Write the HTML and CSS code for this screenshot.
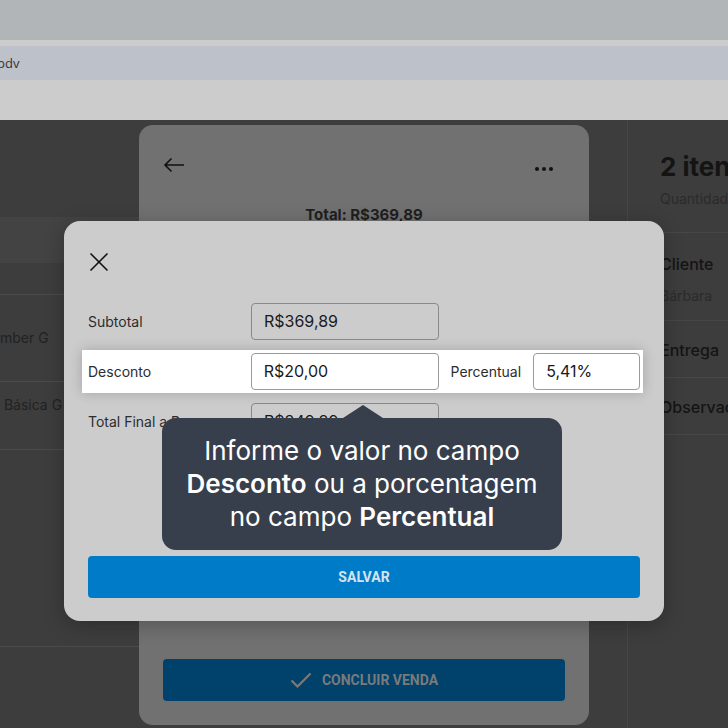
FILE: index.html
```html
<!DOCTYPE html>
<html lang="pt-br">

<head>
    <meta charset="UTF-8">
    <meta name="viewport" content="width=device-width, initial-scale=1.0">
    <title>PDV - Desconto</title>
    <link rel="stylesheet" href="styles.css">
</head>

<body>
    <div class="chrome">
        <div class="tabs"></div>
        <div class="url">pdv</div>
    </div>

    <div class="app">
        <div class="list">
            <div class="list-head"></div>
            <div class="list-band"></div>
            <div class="list-row list-row--sub"></div>
            <div class="list-row list-row--a">mber G</div>
            <div class="list-row list-row--b">&nbsp;Básica G</div>
            <div class="list-row list-row--c"></div>
        </div>

        <div class="sale-card">
            <div class="sale-top">
                <svg class="icon-back" width="22" height="16" viewBox="0 0 22 16">
                    <path d="M21 8H2M8.5 1.5L2 8l6.5 6.5" fill="none" stroke="#111" stroke-width="1.6"/>
                </svg>
                <div class="dots"><span></span><span></span><span></span></div>
            </div>
            <div class="sale-total">Total: R$369,89</div>
            <div class="sale-spacer"></div>
            <button class="btn-finish">
                <svg width="22" height="16" viewBox="0 0 22 16">
                    <path d="M1.5 8.5l6 6L20.5 1.5" fill="none" stroke="#7a7a7a" stroke-width="2.2"/>
                </svg>
                CONCLUIR VENDA
            </button>
        </div>

        <div class="summary">
            <div class="summary-head">
                <div class="summary-title">2 itens</div>
                <div class="summary-sub">Quantidade: 2</div>
            </div>
            <div class="summary-block summary-block--client">
                <div class="summary-label">Cliente</div>
                <div class="summary-sub summary-sub--client">Bárbara</div>
            </div>
            <div class="summary-block">
                <div class="summary-label">Entrega</div>
            </div>
            <div class="summary-block">
                <div class="summary-label">Observações</div>
            </div>
        </div>

        <div class="modal">
            <div class="modal-head">
                <svg width="20" height="20" viewBox="0 0 20 20">
                    <path d="M1.5 1.5l17 17M18.5 1.5l-17 17" fill="none" stroke="#111" stroke-width="1.6"/>
                </svg>
            </div>

            <div class="fields">
                <div class="field-row">
                    <label class="field-label">Subtotal</label>
                    <div class="field-input field-input--muted">R$369,89</div>
                </div>
                <div class="field-row field-row--focus">
                    <label class="field-label">Desconto</label>
                    <div class="field-input">R$20,00</div>
                    <label class="field-label field-label--inline">Percentual</label>
                    <div class="field-input field-input--small">5,41%</div>
                </div>
                <div class="field-row">
                    <label class="field-label">Total Final a Pagar</label>
                    <div class="field-input field-input--muted">R$349,89</div>
                </div>
            </div>

            <button class="btn-save">SALVAR</button>

            <div class="tip">
                Informe o valor no campo <b>Desconto</b> ou a porcentagem no campo <b>Percentual</b>
            </div>
        </div>
    </div>
</body>

</html>
```

FILE: styles.css
```css
html, body {
    margin: 0;
    height: 100%;
    overflow: hidden;
}

body {
    font-family: Inter, "Liberation Sans", sans-serif;
    background-color: #3d3d3d;
}

/* barra do navegador (escurecida) */
.chrome {
    height: 120px;
    background-color: #cccccc;
}

.tabs {
    height: 40px;
    background-color: #b1b5b8;
}

.url {
    margin-top: 6px;
    height: 34px;
    line-height: 34px;
    background-color: #bdc1c9;
    color: #333;
    font-family: "Open Sans", sans-serif;
    font-size: 13px;
    text-indent: -3px;
}

.app {
    position: relative;
    display: flex;
    height: 608px;
    background-color: #3d3d3d;
}

/* lista de produtos (esquerda) */
.list {
    width: 139px;
    flex-shrink: 0;
    color: #222;
    font-size: 14px;
    white-space: nowrap;
}

.list-head {
    height: 97px;
}

.list-band {
    height: 46px;
    background-color: #434343;
}

.list-row {
    border-bottom: 1px solid #4b4b4b;
}

.list-row--sub {
    height: 31px;
}

.list-row--a {
    height: 86px;
    line-height: 86px;
}

.list-row--b {
    height: 68px;
    padding-top: 14px;
    box-sizing: border-box;
}

.list-row--c {
    height: 196px;
}

/* card da venda (centro) */
.sale-card {
    width: 450px;
    height: 600px;
    margin-top: 5px;
    flex-shrink: 0;
    display: flex;
    flex-direction: column;
    background-color: #717171;
    border-radius: 14px;
    padding: 0 24px 24px;
    box-sizing: border-box;
}

.sale-top {
    display: flex;
    justify-content: space-between;
    align-items: center;
    height: 80px;
    padding-right: 12px;
}

.dots {
    display: flex;
    gap: 3px;
    padding-top: 8px;
}

.dots span {
    width: 4px;
    height: 4px;
    border-radius: 50%;
    background-color: #111;
}

.sale-total {
    text-align: center;
    font-weight: 700;
    font-size: 15px;
    color: #1f1f1f;
}

.sale-spacer {
    flex: 1;
}

.btn-finish {
    display: flex;
    justify-content: center;
    align-items: center;
    gap: 10px;
    height: 42px;
    border: none;
    border-radius: 4px;
    background-color: #00426c;
    color: #7a7a7a;
    font-family: Roboto, sans-serif;
    font-weight: 700;
    font-size: 14px;
}

/* resumo (direita) */
.summary {
    margin-left: 38px;
    flex: 1;
    border-left: 1px solid #474747;
    padding-left: 32px;
    white-space: nowrap;
    color: #141414;
}

.summary-head {
    padding-top: 30px;
    height: 113px;
    box-sizing: border-box;
    border-bottom: 1px solid #474747;
}

.summary-title {
    font-size: 26px;
    font-weight: 700;
    line-height: 34px;
}

.summary-sub {
    font-size: 14px;
    color: #2b2b2b;
    margin-top: 6px;
}

.summary-sub--client {
    margin-top: 12px;
}

.summary-block {
    height: 57px;
    padding-top: 18px;
    box-sizing: border-box;
    border-bottom: 1px solid #474747;
}

.summary-block--client {
    height: 88px;
    padding-top: 20px;
}

.summary-label {
    font-size: 16px;
    font-weight: 500;
    line-height: 22px;
}

/* modal de desconto */
.modal {
    position: absolute;
    left: 64px;
    top: 101px;
    width: 600px;
    height: 400px;
    padding: 24px;
    box-sizing: border-box;
    background-color: #cccccc;
    border-radius: 16px;
    box-shadow: 0 4px 20px rgba(0, 0, 0, 0.25);
}

.modal-head {
    height: 34px;
    display: flex;
    align-items: center;
    padding-left: 1px;
}

.fields {
    margin-top: 24px;
    display: flex;
    flex-direction: column;
    gap: 13px;
}

.field-row {
    display: flex;
    align-items: center;
    height: 37px;
}

.field-row--focus {
    position: relative;
    margin: -3px -3px -3px -6px;
    padding: 3px 3px 3px 6px;
    background-color: #fff;
    box-shadow: 0 0 12px rgba(0, 0, 0, 0.2);
}

.field-label {
    width: 163px;
    font-size: 14px;
    color: #2d2d2d;
    white-space: nowrap;
}

.field-label--inline {
    width: auto;
    margin: 0 12px;
}

.field-input {
    width: 188px;
    height: 37px;
    box-sizing: border-box;
    border: 1px solid #9a9a9a;
    border-radius: 4px;
    padding-left: 12px;
    line-height: 35px;
    font-size: 16px;
    color: #1a1a1a;
    background-color: #fff;
}

.field-input--muted {
    background-color: transparent;
    border-color: #8a8a8a;
}

.field-input--small {
    width: 107px;
}

.btn-save {
    display: block;
    width: 100%;
    height: 42px;
    margin-top: 116px;
    border: none;
    border-radius: 4px;
    background-color: #007bc8;
    color: #d5e3ee;
    font-family: Roboto, sans-serif;
    font-weight: 700;
    font-size: 14px;
}

/* balão do tutorial */
.tip {
    position: absolute;
    left: 98px;
    top: 197px;
    width: 400px;
    height: 132px;
    box-sizing: border-box;
    padding: 16px 16px;
    background-color: #373f4d;
    border-radius: 14px;
    color: #fff;
    text-align: center;
    font-size: 26px;
    line-height: 33px;
}

.tip b {
    font-weight: 600;
}

.tip::before {
    content: "";
    position: absolute;
    left: 181px;
    top: -13px;
    border-left: 20px solid transparent;
    border-right: 20px solid transparent;
    border-bottom: 13px solid #373f4d;
}
```
